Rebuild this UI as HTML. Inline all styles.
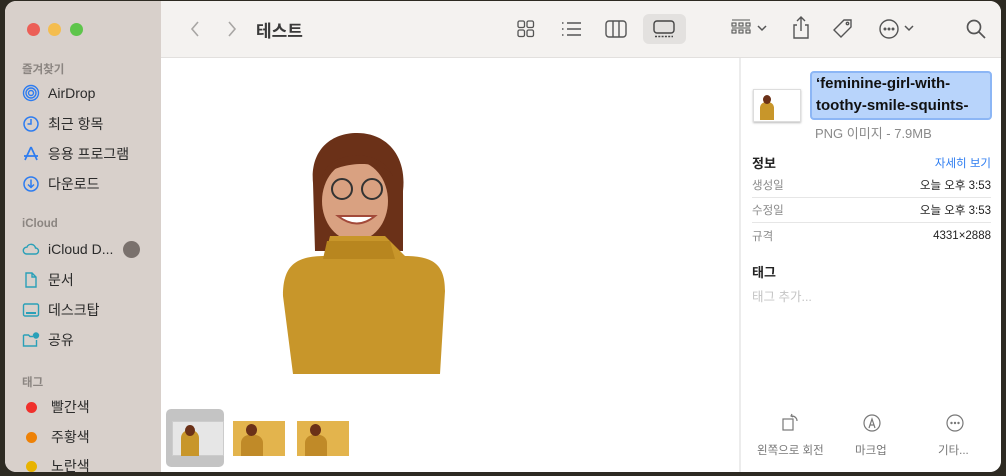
<!DOCTYPE html>
<html><head><meta charset="utf-8"><style>
*{margin:0;padding:0;box-sizing:border-box}
body{width:1006px;height:476px;background:#2d2a22;font-family:"Liberation Sans","Noto Sans CJK KR",sans-serif;position:relative;overflow:hidden}
.win{position:absolute;left:5px;top:1px;width:996px;height:471px;border-radius:11px;overflow:hidden;background:#fff}
.side{position:absolute;left:0;top:0;width:156px;height:100%;background:#d8d0cb}
.tb{position:absolute;left:156px;top:0;right:0;height:57px;background:#f4f2f0;border-bottom:1px solid #e2e0de}
.dot{position:absolute;top:22px;width:13px;height:13px;border-radius:50%}
.sh{position:absolute;left:17px;font-size:11.5px;color:#8b8581;font-weight:bold}
.it{position:absolute;left:17px;font-size:14px;color:#2b2b2b;display:flex;align-items:center}
.it svg{width:18px;height:18px;margin-right:8px}
.ins{position:absolute;left:734px;top:57px;right:0;bottom:0;border-left:2px solid #ececec;background:#fff}
.row{position:absolute;left:11px;right:10px;font-size:11.5px;color:#8a8a8a;display:flex;justify-content:space-between;border-bottom:1px solid #e6e6e6;height:25px;align-items:center}
.row b{color:#222;font-weight:normal}
.ic{position:absolute;color:#555}
</style></head><body>
<div class="win">
<div class="side">
<div class="dot" style="left:22px;background:#ec5f57"></div>
<div class="dot" style="left:43px;background:#f4bd4f"></div>
<div class="dot" style="left:65px;background:#5ec54b"></div>
<div class="sh" style="top:60px">즐겨찾기</div>
<div class="it" style="top:83px"><svg viewBox="0 0 18 18" fill="none" stroke="#2d7cf0" stroke-width="1.4"><circle cx="9" cy="9" r="7.5"/><circle cx="9" cy="9" r="5"/><circle cx="9" cy="9" r="2.5"/></svg>AirDrop</div>
<div class="it" style="top:113px"><svg viewBox="0 0 18 18" fill="none" stroke="#2d7cf0" stroke-width="1.5"><circle cx="9" cy="9" r="7"/><path d="M9 4v5H5.5"/></svg>최근 항목</div>
<div class="it" style="top:143px"><svg viewBox="0 0 18 18" fill="none" stroke="#2d7cf0" stroke-width="1.7"><path d="M9 2L3 15M9 2l6 13M2 11h14"/></svg>응용 프로그램</div>
<div class="it" style="top:173px"><svg viewBox="0 0 18 18" fill="none" stroke="#2d7cf0" stroke-width="1.5"><circle cx="9" cy="9" r="7"/><path d="M9 4.5v8M6 9.5l3 3 3-3"/></svg>다운로드</div>
<div class="sh" style="top:217px">iCloud</div>
<div class="it" style="top:239px"><svg viewBox="0 0 18 18" fill="none" stroke="#2aa0b8" stroke-width="1.4"><path d="M4.5 14h9a3 3 0 0 0 0-6 4.5 4.5 0 0 0-8.6-.8A3.4 3.4 0 0 0 4.5 14z"/></svg>iCloud D...<span style="display:inline-block;width:17px;height:17px;border-radius:50%;background:#7a716d;margin-left:10px"></span></div>
<div class="it" style="top:269px"><svg viewBox="0 0 18 18" fill="none" stroke="#2aa0b8" stroke-width="1.4"><path d="M4 2h6l4 4v10H4z M10 2v4h4"/></svg>문서</div>
<div class="it" style="top:299px"><svg viewBox="0 0 18 18" fill="none" stroke="#2aa0b8" stroke-width="1.4"><rect x="1.5" y="3" width="15" height="12" rx="1.5"/><path d="M4 12h10" stroke-width="2"/></svg>데스크탑</div>
<div class="it" style="top:329px"><svg viewBox="0 0 18 18" fill="none" stroke="#2aa0b8" stroke-width="1.4"><path d="M1.5 4h5l1.5 1.5h3M1.5 4v11h13V9"/><circle cx="14" cy="4.5" r="2.5" fill="#2aa0b8"/></svg>공유</div>
<div class="sh" style="top:373px">태그</div>
<div class="it" style="top:396px"><span style="width:11px;height:11px;border-radius:50%;background:#f0302c;margin:0 14px 0 4px"></span>빨간색</div>
<div class="it" style="top:426px"><span style="width:11px;height:11px;border-radius:50%;background:#ee8106;margin:0 14px 0 4px"></span>주황색</div>
<div class="it" style="top:455px"><span style="width:11px;height:11px;border-radius:50%;background:#e8b300;margin:0 14px 0 4px"></span>노란색</div>
</div>
<div class="tb">
<svg style="position:absolute;left:28px;top:19px" width="12" height="18" fill="none" stroke="#a8a6a4" stroke-width="1.6"><path d="M9 2L3 9l6 7"/></svg>
<svg style="position:absolute;left:65px;top:19px" width="12" height="18" fill="none" stroke="#a8a6a4" stroke-width="1.6"><path d="M3 2l6 7-6 7"/></svg>
<div style="position:absolute;left:95px;top:16px;font-size:17px;font-weight:bold;color:#3a3a3a">테스트</div>
<svg style="position:absolute;left:355px;top:18px" width="20" height="20" fill="none" stroke="#555" stroke-width="1.3"><rect x="2" y="2" width="6.5" height="6.5" rx="1.5"/><rect x="11" y="2" width="6.5" height="6.5" rx="1.5"/><rect x="2" y="11" width="6.5" height="6.5" rx="1.5"/><rect x="11" y="11" width="6.5" height="6.5" rx="1.5"/></svg>
<svg style="position:absolute;left:399px;top:18px" width="22" height="20" fill="none" stroke="#555" stroke-width="1.4"><path d="M7 4h14M7 10h14M7 16h14"/><path d="M2 4h1.5M2 10h1.5M2 16h1.5"/></svg>
<svg style="position:absolute;left:443px;top:17px" width="24" height="22" fill="none" stroke="#555" stroke-width="1.4"><rect x="2" y="3" width="20" height="16" rx="3"/><path d="M9 3v16M15 3v16"/></svg>
<div style="position:absolute;left:482px;top:13px;width:43px;height:30px;border-radius:6px;background:#e3e1df"></div>
<svg style="position:absolute;left:491px;top:17px" width="24" height="22" fill="none" stroke="#444" stroke-width="1.4"><rect x="2" y="3" width="20" height="12" rx="3"/><path d="M3 18.5h18" stroke-dasharray="2 1.3"/></svg>
<svg style="position:absolute;left:569px;top:16px" width="22" height="22" fill="none" stroke="#555" stroke-width="1.1"><path d="M2 3h18"/><rect x="2" y="6" width="4" height="3"/><rect x="9" y="6" width="4" height="3"/><rect x="16" y="6" width="4" height="3"/><rect x="2" y="13" width="4" height="3"/><rect x="9" y="13" width="4" height="3"/><rect x="16" y="13" width="4" height="3"/><path d="M2 11h18"/></svg>
<svg style="position:absolute;left:596px;top:23px" width="10" height="8" fill="none" stroke="#555" stroke-width="1.5"><path d="M1 2l4 4 4-4"/></svg>
<svg style="position:absolute;left:630px;top:14px" width="20" height="26" fill="none" stroke="#555" stroke-width="1.4"><path d="M10 2v14M6 6l4-4 4 4M6 10H3v13h14V10h-3"/></svg>
<svg style="position:absolute;left:670px;top:16px" width="24" height="24" fill="none" stroke="#555" stroke-width="1.4"><path d="M13 3h7v7L10 20l-7-7z"/><circle cx="16.5" cy="6.5" r="1.2"/></svg>
<svg style="position:absolute;left:717px;top:17px" width="22" height="22" fill="none" stroke="#555" stroke-width="1.4"><circle cx="11" cy="11" r="9"/><circle cx="7" cy="11" r=".8" fill="#555"/><circle cx="11" cy="11" r=".8" fill="#555"/><circle cx="15" cy="11" r=".8" fill="#555"/></svg>
<svg style="position:absolute;left:743px;top:23px" width="10" height="8" fill="none" stroke="#555" stroke-width="1.5"><path d="M1 2l4 4 4-4"/></svg>
<svg style="position:absolute;left:804px;top:17px" width="22" height="22" fill="none" stroke="#555" stroke-width="1.7"><circle cx="9" cy="9" r="6.5"/><path d="M14 14l6 6"/></svg>
</div>
<!-- person -->
<svg style="position:absolute;left:270px;top:130px" width="180" height="245" viewBox="0 0 180 245">
<path d="M38 52 C35 20 55 2 82 2 C112 2 132 25 128 60 L128 120 L40 120 Z" fill="#6b3118"/>
<ellipse cx="80" cy="70" rx="33" ry="40" fill="#d9a181"/>
<path d="M47 45 C55 20 105 15 118 45 C110 30 70 28 47 45Z" fill="#6b3118"/>
<circle cx="67" cy="58" r="10" fill="none" stroke="#333" stroke-width="2"/><circle cx="97" cy="58" r="10" fill="none" stroke="#333" stroke-width="2"/>
<path d="M63 85 Q82 100 100 85 Z" fill="#fff" stroke="#a24a3a" stroke-width="2"/>
<path d="M55 105 L110 105 L130 125 C160 125 170 135 170 160 L165 243 L18 243 L8 165 C8 135 20 125 50 125 Z" fill="#c8962a"/>
<path d="M52 110 L115 110 L120 128 L48 128Z" fill="#b8861f"/>
</svg>
<div style="position:absolute;left:161px;top:408px;width:58px;height:58px;border-radius:5px;background:#c4c4c4"></div>
<div style="position:absolute;left:167px;top:420px;width:52px;height:35px;background:#e6e6e6;border:1px solid #ccc"><div style="position:absolute;left:8px;top:8px;width:18px;height:26px;background:#c8962a;border-radius:8px 8px 0 0"></div><div style="position:absolute;left:12px;top:3px;width:10px;height:11px;background:#6b3118;border-radius:50%"></div></div>
<div style="position:absolute;left:228px;top:420px;width:52px;height:35px;background:#e3b44d"><div style="position:absolute;left:8px;top:14px;width:22px;height:21px;background:#c08a28;border-radius:8px 8px 0 0"></div><div style="position:absolute;left:13px;top:3px;width:11px;height:12px;background:#6b3118;border-radius:50%"></div></div>
<div style="position:absolute;left:292px;top:420px;width:52px;height:35px;background:#e3b44d"><div style="position:absolute;left:8px;top:14px;width:22px;height:21px;background:#c08a28;border-radius:8px 8px 0 0"></div><div style="position:absolute;left:13px;top:3px;width:11px;height:12px;background:#6b3118;border-radius:50%"></div></div>
<div class="ins">
<div style="position:absolute;left:12px;top:31px;width:48px;height:33px;border:1px solid #ddd;box-shadow:0 1px 2px #bbb"><div style="position:absolute;left:6px;top:12px;width:14px;height:18px;background:#c8962a;border-radius:6px 6px 0 0"></div><div style="position:absolute;left:9px;top:5px;width:8px;height:9px;background:#6b3118;border-radius:50%"></div></div>
<div style="position:absolute;left:69px;top:13px;width:182px;height:49px;background:#b8d4fb;border:2px solid #8cb6f5;border-radius:4px;font-size:15px;font-weight:bold;color:#111;line-height:22px;padding-left:4px">‘feminine-girl-with-<br>toothy-smile-squints-</div>
<div style="position:absolute;left:74px;top:65px;font-size:13px;color:#8a8a8a">PNG 이미지 - 7.9MB</div>
<div style="position:absolute;left:11px;top:95px;font-size:13px;font-weight:bold;color:#222">정보</div>
<div style="position:absolute;right:10px;top:97px;font-size:11.5px;color:#2d7cf0">자세히 보기</div>
<div class="row" style="top:115px"><span>생성일</span><b>오늘 오후 3:53</b></div>
<div class="row" style="top:140px"><span>수정일</span><b>오늘 오후 3:53</b></div>
<div class="row" style="top:165px;border:none"><span>규격</span><b>4331×2888</b></div>
<div style="position:absolute;left:11px;top:204px;font-size:13px;font-weight:bold;color:#222">태그</div>
<div style="position:absolute;left:11px;top:228px;font-size:12.5px;color:#c4c4c4">태그 추가...</div>
<svg style="position:absolute;left:40px;top:355px" width="20" height="20" fill="none" stroke="#777" stroke-width="1.2"><rect x="2" y="6" width="10" height="11"/><path d="M11 3a5 5 0 0 1 5 5M11 1l-1 2 2 1"/></svg>
<svg style="position:absolute;left:121px;top:355px" width="20" height="20" fill="none" stroke="#777" stroke-width="1.2"><circle cx="10" cy="10" r="8"/><path d="M7 15l3-9 3 9M8 12h4"/></svg>
<svg style="position:absolute;left:204px;top:355px" width="20" height="20" fill="none" stroke="#777" stroke-width="1.2"><circle cx="10" cy="10" r="8"/><circle cx="6.5" cy="10" r=".6"/><circle cx="10" cy="10" r=".6"/><circle cx="13.5" cy="10" r=".6"/></svg>
<div style="position:absolute;left:16px;top:384px;font-size:11.5px;color:#777">왼쪽으로 회전</div>
<div style="position:absolute;left:114px;top:384px;font-size:11.5px;color:#777">마크업</div>
<div style="position:absolute;left:197px;top:384px;font-size:11.5px;color:#777">기타...</div>
</div>
</div>
</body></html>
